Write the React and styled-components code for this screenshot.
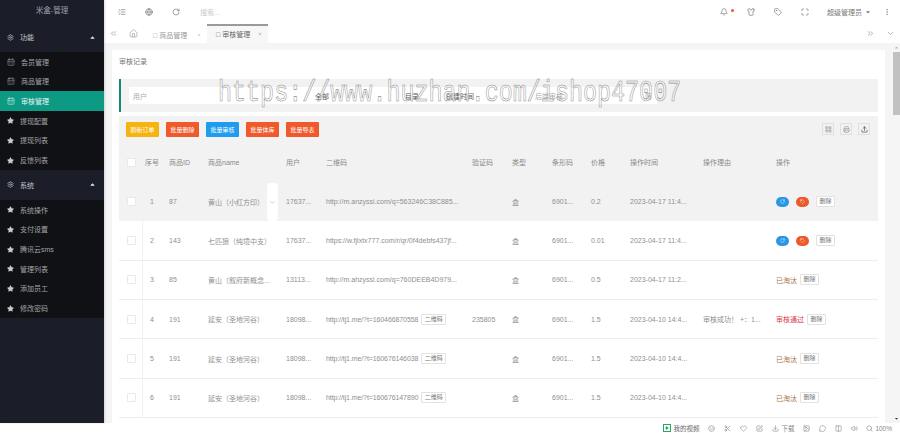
import React from "react";
import styled, { createGlobalStyle } from "styled-components";
import {
  Bell,
  ChevronDown,
  ChevronsLeft,
  ChevronsRight,
  CalendarDays,
  Download,
  EllipsisVertical,
  Globe,
  Heart,
  Home,
  LayoutGrid,
  ListCollapse,
  Maximize,
  MessageCircle,
  Play,
  Printer,
  RotateCw,
  Scissors,
  Search,
  Settings,
  Shirt,
  Smile,
  SquarePen,
  Tag,
  Upload,
  Volume2,
  Image,
  Columns2,
  X,
} from "lucide-react";
import { FaStar, FaCaretUp, FaCaretDown } from "react-icons/fa";

const cjk = `"Liberation Sans", "Noto Sans CJK SC", sans-serif`;

const GlobalStyle = createGlobalStyle`
  html, body {
    margin: 0;
    width: 900px;
    height: 433px;
    overflow: hidden;
    background: #fff;
    font-family: ${cjk};
    font-size: 7px;
    color: #888;
  }
  * { box-sizing: border-box; }
`;

const Page = styled.div`
  position: relative;
  width: 900px;
  height: 433px;
  display: flex;
  flex-direction: column;
`;

const Shell = styled.div`
  flex: 0 0 423px;
  display: flex;
  min-height: 0;
`;

const Sidebar = styled.aside`
  flex: 0 0 104px;
  background: #1b1e28;
  color: #a9abb0;
  box-shadow: 1px 0 2px rgba(0, 0, 0, 0.15);
  z-index: 1;
`;

const Brand = styled.div`
  height: 22px;
  line-height: 22px;
  text-align: center;
  font-size: 7.5px;
  color: #9ea1a8;
`;

const GroupHead = styled.div`
  height: 30px;
  padding: 0 7px;
  display: flex;
  align-items: center;
  gap: 6px;
  color: #c4c6ca;
  svg:last-child {
    margin-left: auto;
    margin-right: 1px;
    color: #e4e4e4;
  }
`;

const SubMenu = styled.div`
  background: #101114;
`;

const MenuItem = styled.div`
  height: 19.67px;
  padding-left: 7px;
  display: flex;
  align-items: center;
  gap: 6px;
  background: ${(props) => (props.$active ? "#0d9a84" : "transparent")};
  color: ${(props) => (props.$active ? "#e6f5f2" : "#a2a4a8")};
`;

const Main = styled.main`
  flex: 1;
  min-width: 0;
  display: flex;
  flex-direction: column;
`;

const TopBar = styled.header`
  flex: 0 0 24px;
  display: flex;
  align-items: center;
  padding-left: 14px;
  color: #777;
`;

const TopIcon = styled.span`
  display: flex;
  width: ${(props) => props.$w || 27}px;
  color: ${(props) => props.$color || "#777"};
`;

const SearchHint = styled.span`
  color: #c9c9c9;
  margin-left: 4px;
`;

const TopRight = styled.div`
  margin-left: auto;
  display: flex;
  align-items: center;
  height: 100%;
  padding-right: 9px;
`;

const NoticeDot = styled.i`
  width: 3px;
  height: 3px;
  margin: 0 13px 3px 3px;
  border-radius: 50%;
  background: #e8553a;
`;

const UserName = styled.span`
  display: flex;
  align-items: center;
  gap: 3px;
  color: #777;
  margin-right: 12px;
  margin-left: 5px;
`;

const TabBar = styled.nav`
  flex: 0 0 19px;
  display: flex;
  align-items: center;
  padding-left: 5px;
  color: #999;
`;

const TabRow = styled.div`
  display: flex;
  align-items: center;
  margin-left: 11px;
`;

const HomeIcon = styled(Home)`
  margin-right: 10px;
  color: #aaa;
`;

const Tab = styled.div`
  width: ${(props) => (props.$active ? 61 : 59)}px;
  height: 19px;
  display: flex;
  align-items: center;
  justify-content: space-between;
  padding: 0 6px 0 ${(props) => (props.$active ? 9 : 5)}px;
  background: ${(props) => (props.$active ? "#f7f7f7" : "transparent")};
  border-top: 2px solid ${(props) => (props.$active ? "#9a9a9a" : "transparent")};
  margin-top: ${(props) => (props.$active ? -1 : 0)}px;
  color: ${(props) => (props.$active ? "#666" : "#999")};
`;

const TabRight = styled.div`
  margin-left: auto;
  display: flex;
  gap: 11px;
  padding-right: 5px;
  color: #999;
`;

const Body = styled.div`
  flex: 1;
  min-height: 0;
  display: flex;
  background: #f5f5f5;
  padding: 7px 0 0 8px;
`;

const Card = styled.section`
  flex: 0 0 773px;
  background: #fff;
  padding: 0 7px;
`;

const CardTitle = styled.div`
  height: 29px;
  padding-bottom: 8px;
  display: flex;
  align-items: center;
  color: #777;
`;

const FilterBar = styled.div`
  height: 33px;
  display: flex;
  align-items: center;
  padding-left: 8px;
  background: #f2f2f2;
  border-left: 2.5px solid #138a78;
`;

const FilterField = styled.div`
  width: ${(props) => props.$w}px;
  height: 17px;
  padding-left: ${(props) => props.$pad || 4}px;
  display: flex;
  align-items: center;
  background: #fff;
  color: ${(props) => (props.$hint ? "#aaa" : "#555")};
`;

const Toolbar = styled.div`
  margin-top: 4px;
  height: 26px;
  display: flex;
  align-items: center;
  gap: 7px;
  padding: 0 8px 0 7px;
  background: #f2f2f2;
`;

const ActionButton = styled.button`
  width: 33px;
  height: 15px;
  padding: 0;
  border: 0;
  border-radius: 1px;
  font: inherit;
  font-size: 6px;
  color: #fff;
  background: ${(props) => props.$color};
`;

const ToolIcons = styled.div`
  margin-left: auto;
  display: flex;
  gap: 6px;
`;

const ToolIcon = styled.span`
  width: 12px;
  height: 12px;
  display: flex;
  align-items: center;
  justify-content: center;
  border: 1px solid #e0e0e0;
  color: #777;
`;

const Row = styled.div`
  position: relative;
  height: ${(props) => (props.$head ? 40 : 39.35)}px;
  display: grid;
  grid-template-columns: 24px 22px 39px 78px 40px 146px 40px 40px 39px 39px 73px 73px 1fr;
  align-items: stretch;
  background: ${(props) => (props.$gray ? "#f2f2f2" : "#fff")};
  border-bottom: ${(props) => (props.$gray ? "0" : "1px solid #ededed")};
`;

const Cell = styled.div`
  display: flex;
  align-items: center;
  gap: 3px;
  padding-left: 4px;
  white-space: nowrap;
  overflow: hidden;
  color: ${(props) => (props.$head ? "#8a8a8a" : "#8f8f8f")};
`;

const CheckCell = styled.div`
  display: flex;
  align-items: center;
  padding-left: 8px;
  border-right: 1px solid #f1f1f1;
`;

const NoCell = styled(Cell)`
  justify-content: center;
  padding: 0 4px 0 0;
`;

const Check = styled.i`
  width: 9px;
  height: 9px;
  background: #fff;
  border: 1px solid #e9e9e9;
  border-radius: 1px;
`;

const UrlText = styled.span`
  letter-spacing: ${(props) => (props.$short ? "-0.1px" : "0")};
`;

const SmallButton = styled.button`
  height: 11px;
  padding: 0 2.5px;
  font: inherit;
  font-size: 6px;
  line-height: 9px;
  color: #777;
  background: #fff;
  border: 1px solid #e2e2e2;
  border-radius: 1px;
`;

const Pill = styled.span`
  width: 13px;
  height: 10px;
  margin-right: 4px;
  display: flex;
  align-items: center;
  justify-content: center;
  border-radius: 5px;
  color: #fff;
  background: ${(props) => props.$color};
`;

const Status = styled.span`
  color: ${(props) => props.$color};
`;

const SelectHandle = styled.span`
  position: absolute;
  left: 148px;
  top: 1px;
  width: 11px;
  height: 38px;
  display: flex;
  align-items: center;
  justify-content: center;
  background: #fff;
  border-radius: 4px;
  color: #aaa;
`;

const ScrollTrack = styled.div`
  flex: 1;
  margin-top: -7px;
  display: flex;
  justify-content: flex-end;
`;

const ScrollColumn = styled.div`
  width: 7px;
  display: flex;
  flex-direction: column;
  align-items: center;
  color: #555;
`;

const ScrollCaret = styled.span`
  height: 9px;
  margin-top: ${(props) => (props.$end ? "auto" : 0)};
  display: flex;
  align-items: center;
  color: ${(props) => (props.$end ? "#333" : "#b5b5b5")};
`;

const ScrollThumb = styled.div`
  width: 7px;
  height: 63px;
  background: #c1c1c1;
`;

const StatusBar = styled.footer`
  flex: 0 0 10px;
  display: flex;
  align-items: center;
  justify-content: flex-end;
  padding-right: 8px;
  font-size: 6.5px;
  color: #888;
`;

const StatusItem = styled.span`
  display: flex;
  align-items: center;
  gap: 2px;
  margin-left: ${(props) => props.$gap ?? 8}px;
  color: ${(props) => props.$color || "#888"};
`;

const PlayBox = styled.span`
  width: 8px;
  height: 8px;
  display: flex;
  align-items: center;
  justify-content: center;
  border: 1px solid #27a567;
  color: #27a567;
`;

// the source watermark is a tall monospaced face, so the mono font is stretched upward
const Watermark = styled.div`
  position: absolute;
  left: 218px;
  top: 78px;
  font-family: "Liberation Mono", monospace;
  font-size: 23.4px;
  line-height: 30px;
  white-space: nowrap;
  color: rgba(255, 255, 255, 0.3);
  -webkit-text-stroke: 0.45px #8e8e8e;
  transform: scaleY(1.3);
  transform-origin: left center;
  pointer-events: none;
  z-index: 2;
`;

const topMenu = ["会员管理", "商品管理", "审核管理", "提现配置", "提现列表", "反馈列表"];
const systemMenu = ["系统操作", "支付设置", "腾讯云sms", "管理列表", "添加员工", "修改密码"];
const headers = ["商品ID", "商品name", "用户", "二维码", "验证码", "类型", "条形码", "价格", "操作时间", "操作理由", "操作"];

const rows = [
  { no: 1, id: 87, name: "黄山（小红方印）", user: "17637...", url: "http://m.anzyssi.com/q=563246C38C885...", price: "0.2", time: "2023-04-17 11:4...", state: "todo" },
  { no: 2, id: 143, name: "七匹狼（纯境中支）", user: "17637...", url: "https://w.fjlxtx777.com/r/qr/0f4debfs437jf...", price: "0.01", time: "2023-04-17 11:4...", state: "todo" },
  { no: 3, id: 85, name: "黄山（叙府新概念...", user: "13113...", url: "http://m.ahzyssi.com/q=760DEEB4D979...", price: "0.5", time: "2023-04-17 11:2...", state: "out" },
  { no: 4, id: 191, name: "延安（圣地河谷）", user: "18098...", url: "http://tj1.me/?t=160466870558", qr: true, code: "235805", price: "1.5", time: "2023-04-10 14:4...", reason: "审核成功！ +：1...", state: "pass" },
  { no: 5, id: 191, name: "延安（圣地河谷）", user: "18098...", url: "http://tj1.me/?t=160676146038", qr: true, price: "1.5", time: "2023-04-10 14:4...", state: "out" },
  { no: 6, id: 191, name: "延安（圣地河谷）", user: "18098...", url: "http://tj1.me/?t=160676147890", qr: true, price: "1.5", time: "2023-04-10 14:4...", state: "out" },
];

function MenuIcon({ index, group }) {
  if (group === 0 && index < 3) return <CalendarDays size={8} strokeWidth={1.5} />;
  return <FaStar size={7} color="#c9cacc" />;
}

function RowActions({ state }) {
  if (state === "todo") {
    return (
      <>
        <Pill $color="#2a97e6"><RotateCw size={5} strokeWidth={2} /></Pill>
        <Pill $color="#ec5a2b"><Tag size={5} strokeWidth={2} /></Pill>
        <SmallButton>删除</SmallButton>
      </>
    );
  }
  return (
    <>
      {state === "pass" ? <Status $color="#dd3a4c">审核通过</Status> : <Status $color="#a8764f">已淘汰</Status>}
      <SmallButton>删除</SmallButton>
    </>
  );
}

export default function App() {
  return (
    <Page>
      <GlobalStyle />
      <Shell>
        <Sidebar>
          <Brand>米盒-管理</Brand>
          <GroupHead>
            <Settings size={7} />
            功能
            <FaCaretUp size={7} />
          </GroupHead>
          <SubMenu>
            {topMenu.map((item, i) => (
              <MenuItem key={item} $active={item === "审核管理"}>
                <MenuIcon index={i} group={0} />
                {item}
              </MenuItem>
            ))}
          </SubMenu>
          <GroupHead>
            <Settings size={7} />
            系统
            <FaCaretUp size={7} />
          </GroupHead>
          <SubMenu>
            {systemMenu.map((item, i) => (
              <MenuItem key={item}>
                <MenuIcon index={i} group={1} />
                {item}
              </MenuItem>
            ))}
          </SubMenu>
        </Sidebar>

        <Main>
          <TopBar>
            <TopIcon><ListCollapse size={8} /></TopIcon>
            <TopIcon><Globe size={8} /></TopIcon>
            <TopIcon $w={24}><RotateCw size={8} /></TopIcon>
            <SearchHint>搜索...</SearchHint>
            <TopRight>
              <Bell size={8} color="#777" />
              <NoticeDot />
              <TopIcon><Shirt size={8} /></TopIcon>
              <TopIcon><Tag size={8} /></TopIcon>
              <TopIcon $w={21}><Maximize size={8} /></TopIcon>
              <UserName>超级管理员 <FaCaretDown size={6} /></UserName>
              <EllipsisVertical size={8} color="#888" />
            </TopRight>
          </TopBar>

          <TabBar>
            <ChevronsLeft size={9} />
            <TabRow>
              <HomeIcon size={9} />
              <Tab>□ 商品管理 <X size={4} /></Tab>
              <Tab $active>□ 审核管理 <X size={4} /></Tab>
            </TabRow>
            <TabRight>
              <ChevronsRight size={9} />
              <ChevronDown size={9} />
            </TabRight>
          </TabBar>

          <Body>
            <Card>
              <CardTitle>审核记录</CardTitle>
              <FilterBar>
                <FilterField $w={181} $hint>用户</FilterField>
                <FilterField $w={90} $pad={5}>全部</FilterField>
                <FilterField $w={41} $pad={5}>目录</FilterField>
                <FilterField $w={89} $pad={5}>创建时间</FilterField>
                <FilterField $w={110} $pad={5} $hint>后端审核</FilterField>
                <FilterField $w={17} $pad={5} $hint>筛</FilterField>
              </FilterBar>
              <Toolbar>
                <ActionButton $color="#f6b40f">刷新订单</ActionButton>
                <ActionButton $color="#f0592b">批量删除</ActionButton>
                <ActionButton $color="#1f9bef">批量审核</ActionButton>
                <ActionButton $color="#f0592b">批量体库</ActionButton>
                <ActionButton $color="#f0592b">批量导表</ActionButton>
                <ToolIcons>
                  <ToolIcon><LayoutGrid size={7} strokeWidth={1.5} /></ToolIcon>
                  <ToolIcon><Printer size={7} strokeWidth={1.5} /></ToolIcon>
                  <ToolIcon><Upload size={7} strokeWidth={2} color="#333" /></ToolIcon>
                </ToolIcons>
              </Toolbar>
              <Row $gray $head>
                <CheckCell><Check /></CheckCell>
                <NoCell $head>序号</NoCell>
                {headers.map((h) => (
                  <Cell key={h} $head>{h}</Cell>
                ))}
              </Row>
              {rows.map((row, i) => (
                <Row key={row.no} $gray={i === 0}>
                  <CheckCell><Check /></CheckCell>
                  <NoCell>{row.no}</NoCell>
                  <Cell>{row.id}</Cell>
                  <Cell>{row.name}</Cell>
                  <Cell>{row.user}</Cell>
                  <Cell>
                    <UrlText $short={row.qr}>{row.url}</UrlText>
                    {row.qr && <SmallButton>二维码</SmallButton>}
                  </Cell>
                  <Cell>{row.code}</Cell>
                  <Cell>盒</Cell>
                  <Cell>6901...</Cell>
                  <Cell>{row.price}</Cell>
                  <Cell>{row.time}</Cell>
                  <Cell>{row.reason}</Cell>
                  <Cell><RowActions state={row.state} /></Cell>
                  {i === 0 && <SelectHandle><ChevronDown size={7} /></SelectHandle>}
                </Row>
              ))}
            </Card>
            <ScrollTrack>
              <ScrollColumn>
                <ScrollCaret><FaCaretUp size={5} /></ScrollCaret>
                <ScrollThumb />
                <ScrollCaret $end><FaCaretDown size={5} /></ScrollCaret>
              </ScrollColumn>
            </ScrollTrack>
          </Body>
        </Main>
      </Shell>

      <StatusBar>
        <StatusItem $color="#666">
          <PlayBox><Play size={4} fill="#27a567" /></PlayBox>
          我的视频
        </StatusItem>
        <StatusItem $gap={9}><Smile size={7} /></StatusItem>
        <StatusItem $gap={9}><Scissors size={7} /></StatusItem>
        <StatusItem $gap={9}><Heart size={7} /></StatusItem>
        <StatusItem $gap={9}><SquarePen size={7} /></StatusItem>
        <StatusItem $gap={9}><Download size={7} />下载</StatusItem>
        <StatusItem $gap={9}><Image size={7} /></StatusItem>
        <StatusItem $gap={9}><MessageCircle size={7} /></StatusItem>
        <StatusItem $gap={9}><Columns2 size={7} /></StatusItem>
        <StatusItem $gap={9}><Volume2 size={7} /></StatusItem>
        <StatusItem $gap={8}><Search size={7} />100%</StatusItem>
      </StatusBar>

      <Watermark>https://www.huzhan.com/ishop47007</Watermark>
    </Page>
  );
}
